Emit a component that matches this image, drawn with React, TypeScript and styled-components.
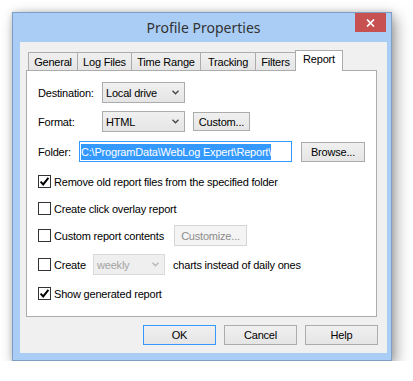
import styled, { createGlobalStyle } from 'styled-components';

const GlobalStyle = createGlobalStyle`
  html, body {
    margin: 0;
    background: #ffffff;
  }
  body {
    font-family: "Liberation Sans", Arial, sans-serif;
    font-size: 11px;
    letter-spacing: -0.2px;
    color: #000000;
  }
`;

const Page = styled.div`
  padding: 12px 0 0 12px;
`;

const Window = styled.div`
  box-sizing: border-box;
  width: 380px;
  height: 349px;
  display: flex;
  flex-direction: column;
  background: #a9cdf5;
  border: 1px solid #7e9ec4;
  padding: 0 4px 7px 7px;
  box-shadow: 4px 5px 14px rgba(0, 0, 0, 0.38), 0 0 6px rgba(0, 0, 0, 0.15);
`;

const TitleBar = styled.div`
  height: 29px;
  display: grid;
  grid-template-columns: 1fr auto 1fr;
  align-items: start;
`;

const Title = styled.div`
  grid-column: 2;
  font-family: "Noto Sans", "Open Sans", sans-serif;
  font-size: 14px;
  letter-spacing: 0;
  line-height: 29px;
  color: #333333;
`;

const CloseButton = styled.div`
  grid-column: 3;
  justify-self: end;
  width: 31px;
  height: 19px;
  margin-right: 1px;
  background: #c75050;
  display: flex;
  align-items: center;
  justify-content: center;
`;

const Client = styled.div`
  flex: 1;
  background: #f0f0f0;
  padding: 8px 10px 0 6px;
  display: flex;
  flex-direction: column;
`;

const TabStrip = styled.div`
  height: 20px;
  display: flex;
  align-items: flex-end;
  padding-left: 2px;
`;

const Tab = styled.div<{ $width: number; $active?: boolean }>`
  box-sizing: border-box;
  width: ${p => p.$width}px;
  height: ${p => (p.$active ? 21 : 18)}px;
  margin-left: -1px;
  margin-bottom: ${p => (p.$active ? -1 : 0)}px;
  position: relative;
  z-index: ${p => (p.$active ? 1 : 0)};
  border: 1px solid #acacac;
  border-bottom: none;
  background: ${p => (p.$active ? '#ffffff' : 'linear-gradient(#f0f0f0, #e5e5e5)')};
  display: flex;
  justify-content: center;
  padding-top: ${p => (p.$active ? 2 : 3)}px;

  &:first-child {
    margin-left: 0;
  }
`;

const Panel = styled.div`
  box-sizing: border-box;
  height: 247px;
  border: 1px solid #acacac;
  background: #ffffff;
  padding: 11px 11px 0 11px;
  display: flex;
  flex-direction: column;
`;

const Row = styled.div<{ $top?: number }>`
  height: 21px;
  margin-top: ${p => p.$top ?? 0}px;
  display: flex;
  align-items: center;
`;

const Label = styled.div<{ $width: number }>`
  width: ${p => p.$width}px;
  flex: none;
`;

const Select = styled.div<{ $width: number; $disabled?: boolean; $gap?: number }>`
  box-sizing: border-box;
  width: ${p => p.$width}px;
  height: 21px;
  margin-left: ${p => p.$gap ?? 0}px;
  flex: none;
  border: 1px solid ${p => (p.$disabled ? '#d9d9d9' : '#acacac')};
  background: ${p => (p.$disabled ? '#efefef' : 'linear-gradient(#f0f0f0, #e5e5e5)')};
  color: ${p => (p.$disabled ? '#a3a3a3' : '#000000')};
  display: flex;
  align-items: center;
  justify-content: space-between;
  padding: 0 5px 0 3px;
`;

const Button = styled.div<{ $width: number; $height?: number; $gap?: number; $disabled?: boolean; $default?: boolean }>`
  box-sizing: border-box;
  width: ${p => p.$width}px;
  height: ${p => p.$height ?? 20}px;
  margin-left: ${p => p.$gap ?? 0}px;
  flex: none;
  border: 1px solid ${p => (p.$default ? '#3399ff' : p.$disabled ? '#d5d5d5' : '#acacac')};
  background: ${p => (p.$disabled ? '#f4f4f4' : 'linear-gradient(#f0f0f0, #e5e5e5)')};
  color: ${p => (p.$disabled ? '#8d8d8d' : '#000000')};
  display: flex;
  align-items: center;
  justify-content: center;
`;

const TextInput = styled.div<{ $width: number }>`
  box-sizing: border-box;
  width: ${p => p.$width}px;
  height: 21px;
  flex: none;
  border: 1px solid #3399ff;
  background: #ffffff;
  display: flex;
  align-items: center;
  padding-left: 1px;
`;

const Selected = styled.span`
  background: #3399ff;
  color: #ffffff;
  line-height: 16px;
  white-space: nowrap;
`;

const CheckControl = styled.div<{ $width?: number }>`
  display: flex;
  align-items: center;
  flex: none;
  width: ${p => (p.$width ? `${p.$width}px` : 'auto')};
`;

const Box = styled.div`
  box-sizing: border-box;
  width: 13px;
  height: 13px;
  border: 1px solid #333333;
  background: #ffffff;
  display: flex;
  align-items: center;
  justify-content: center;
  margin-right: 3px;
`;

const PlainText = styled.div<{ $gap?: number }>`
  margin-left: ${p => p.$gap ?? 0}px;
`;

const Footer = styled.div`
  margin-top: 8px;
  margin-right: -1px;
  display: flex;
  justify-content: flex-end;
  gap: 8px;
`;

function Chevron({ color = '#444444' }: { color?: string }) {
  return (
    <svg width="7" height="5" viewBox="0 0 7 5">
      <path d="M0.5 0.8 L3.5 3.8 L6.5 0.8" fill="none" stroke={color} strokeWidth="1.3" />
    </svg>
  );
}

function Check({ checked, label, width }: { checked?: boolean; label: string; width?: number }) {
  return (
    <CheckControl $width={width}>
      <Box>
        {checked && (
          <svg width="11" height="11" viewBox="0 0 11 11">
            <path d="M1.6 5.6 L4.2 8.4 L9.4 1.8" fill="none" stroke="#000" strokeWidth="2" />
          </svg>
        )}
      </Box>
      {label}
    </CheckControl>
  );
}

const tabs = [
  { name: 'General', width: 50 },
  { name: 'Log Files', width: 55 },
  { name: 'Time Range', width: 70 },
  { name: 'Tracking', width: 56 },
  { name: 'Filters', width: 41 },
  { name: 'Report', width: 48, active: true },
];

export default function App() {
  return (
    <Page>
      <GlobalStyle />
      <Window>
        <TitleBar>
          <Title>Profile Properties</Title>
          <CloseButton>
            <svg width="9" height="8" viewBox="0 0 9 8">
              <path d="M1 0.5 L8 7.5 M8 0.5 L1 7.5" stroke="#fff" strokeWidth="1.7" />
            </svg>
          </CloseButton>
        </TitleBar>
        <Client>
          <TabStrip>
            {tabs.map(t => (
              <Tab key={t.name} $width={t.width} $active={t.active}>
                {t.name}
              </Tab>
            ))}
          </TabStrip>
          <Panel>
            <Row>
              <Label $width={64}>Destination:</Label>
              <Select $width={83}>
                Local drive
                <Chevron />
              </Select>
            </Row>
            <Row $top={8}>
              <Label $width={64}>Format:</Label>
              <Select $width={83}>
                HTML
                <Chevron />
              </Select>
              <Button $width={57} $height={19} $gap={8}>Custom...</Button>
            </Row>
            <Row $top={9}>
              <Label $width={41}>Folder:</Label>
              <TextInput $width={213}>
                <Selected>C:\ProgramData\WebLog Expert\Report\</Selected>
              </TextInput>
              <Button $width={64} $gap={9}>Browse...</Button>
            </Row>
            <Row $top={9}>
              <Check checked label="Remove old report files from the specified folder" />
            </Row>
            <Row $top={6}>
              <Check label="Create click overlay report" />
            </Row>
            <Row $top={6}>
              <Check label="Custom report contents" width={136} />
              <Button $width={73} $height={21} $disabled>Customize...</Button>
            </Row>
            <Row $top={8}>
              <Check label="Create" width={55} />
              <Select $width={72} $disabled>
                weekly
                <Chevron color="#b5b5b5" />
              </Select>
              <PlainText $gap={8}>charts instead of daily ones</PlainText>
            </Row>
            <Row $top={8}>
              <Check checked label="Show generated report" />
            </Row>
          </Panel>
          <Footer>
            <Button $width={73} $default>OK</Button>
            <Button $width={73}>Cancel</Button>
            <Button $width={73}>Help</Button>
          </Footer>
        </Client>
      </Window>
    </Page>
  );
}
